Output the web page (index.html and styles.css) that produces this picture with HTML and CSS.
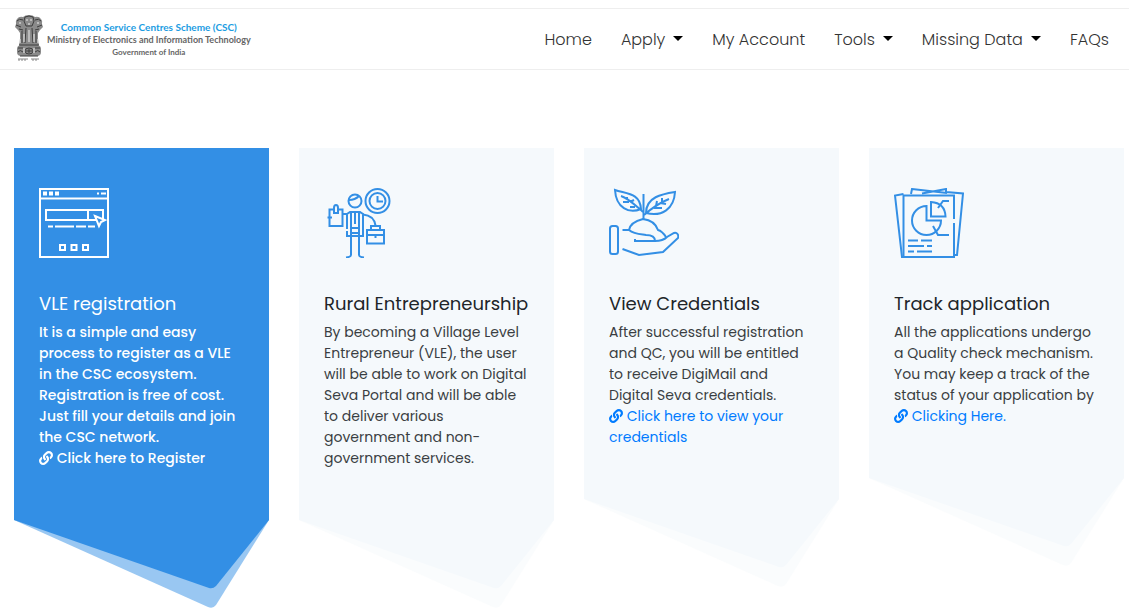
FILE: index.html
```
<!DOCTYPE html>
<html lang="en">
<head>
    <meta charset="UTF-8">
    <meta name="viewport" content="width=device-width, initial-scale=1.0">
    <title>Common Service Centres Scheme (CSC)</title>
    <link rel="stylesheet" href="styles.css">
</head>
<body>
    <!-- Shared shapes -->
    <svg class="defs" aria-hidden="true">
        <symbol id="link-icon" viewBox="0 0 512 512">
            <path d="M326.612 185.391c59.747 59.809 58.927 155.698.36 214.59-.11.12-.24.25-.36.37l-67.2 67.2c-59.27 59.27-155.699 59.262-214.96 0-59.27-59.26-59.27-155.7 0-214.96l37.106-37.106c9.84-9.84 26.786-3.3 27.294 10.606.648 17.722 3.826 35.527 9.69 52.721 1.986 5.822.567 12.262-3.783 16.612l-13.087 13.087c-28.026 28.026-28.905 73.66-1.155 101.96 28.024 28.579 74.086 28.749 102.325.51l67.2-67.19c28.191-28.191 28.073-73.757 0-101.83-3.701-3.694-7.429-6.564-10.341-8.569a16.037 16.037 0 0 1-6.947-12.606c-.396-10.567 3.348-21.456 11.698-29.806l21.054-21.055c5.521-5.521 14.182-6.199 20.584-1.731a152.482 152.482 0 0 1 20.522 17.197zM467.547 44.449c-59.261-59.262-155.69-59.27-214.96 0l-67.2 67.2c-.12.12-.25.25-.36.37-58.566 58.892-59.387 154.781.36 214.59a152.454 152.454 0 0 0 20.521 17.196c6.402 4.468 15.064 3.789 20.584-1.731l21.054-21.055c8.35-8.35 12.094-19.239 11.698-29.806a16.037 16.037 0 0 0-6.947-12.606c-2.912-2.005-6.64-4.875-10.341-8.569-28.073-28.073-28.191-73.639 0-101.83l67.2-67.19c28.239-28.239 74.3-28.069 102.325.51 27.75 28.3 26.872 73.934-1.155 101.96l-13.087 13.087c-4.35 4.35-5.769 10.79-3.783 16.612 5.864 17.194 9.042 34.999 9.69 52.721.509 13.906 17.454 20.446 27.294 10.606l37.106-37.106c59.271-59.259 59.271-155.699.001-214.959z"/>
        </symbol>
        <symbol id="tail" viewBox="0 0 255 89">
            <path opacity="0.5" d="M0 0L194 87q5 2 8-2L255 0z"/>
            <path d="M0 0L195 68q4 1 7-2L255 0z"/>
        </symbol>
    </svg>

    <header class="header">
        <a class="brand" href="#">
            <svg class="emblem" viewBox="0 0 28 48" aria-hidden="true">
                <g fill="#8a8a8a">
                    <path d="M8 2Q10 0 14 0t6 2q4-1 6 2 2 2 1 5l1 3-3 3-2 3v6l1 6H4l1-6v-6l-2-3-3-3 1-3Q0 6 2 4q2-3 6-2z"/>
                    <path d="M5 30h18q3 1 3 4v3q0 4-4 4H6q-4 0-4-4v-3q0-3 3-4z"/>
                </g>
                <g fill="none" stroke="#3c3c3c">
                    <path d="M10 2q4-2 8 0l1 4-2 5h-6L9 6zM2 6q2-3 6-1M26 6q-2-3-6-1M1 10l5 2M27 10l-5 2M4 14l4 1M24 14l-4 1"/>
                    <path d="M7 16v12M11 13l-1 15M17 13l1 15M21 16v12M4 30h20M3 33h5M20 33h5M5 41h18"/>
                    <ellipse cx="14" cy="36" rx="4" ry="3"/>
                    <path d="M3 37q2-3 5 0M20 37q3-3 5 0M11 36h6M14 34v4"/>
                </g>
                <path d="M14 15v12M9 19v8M19 19v8M5 24v4M23 24v4M11 5h2M15 5h2M13 9h2M4 8h2M22 8h2M9 33v5M19 33v5" stroke="#eee" fill="none"/>
                <path d="M3 44h10M16 44h8M4 44v2M7 44v2M10 44v2M18 44v2M21 44v2" stroke="#888" fill="none"/>
            </svg>
            <span class="brand-text">
                <span class="brand-name">Common Service Centres Scheme (CSC)</span>
                <span class="brand-ministry">Ministry of Electronics and Information Technology</span>
                <span class="brand-gov">Government of India</span>
            </span>
        </a>
        <nav class="nav">
            <a href="#">Home</a>
            <button type="button" class="dropdown">Apply</button>
            <a href="#">My Account</a>
            <button type="button" class="dropdown">Tools</button>
            <button type="button" class="dropdown">Missing Data</button>
            <a href="#">FAQs</a>
        </nav>
    </header>

    <main class="cards">
        <article class="card active">
            <div class="card-body">
                <svg class="card-icon" viewBox="0 0 70 70" aria-hidden="true">
                    <path d="M1 1h68v68H1zM1 10.500h68M7 22h57v10H7zM49 22v10"/>
                    <path d="M4 5.500h4M10 5.500h4M16 5.500h4" stroke-width="4"/>
                    <path d="M58 5.500h2M62 5.500h5M9 38.500h5M16 38.500h19M37 38.500h10M49 38.500h7"/>
                    <path class="solid" d="M56 28l10 4-4 2-2 4z"/>
                    <path d="M21 57h5v5h-5zM32.500 57h5v5h-5zM44 57h5v5h-5z"/>
                </svg>
                <h4>VLE registration</h4>
                <p>It is a simple and easy process to register as a VLE in the CSC ecosystem. Registration is free of cost. Just fill your details and join the CSC network.<br>
                <a href="#"><svg class="link-icon" aria-hidden="true"><use href="#link-icon"/></svg> Click here to Register</a></p>
            </div>
            <svg class="card-tail" viewBox="0 0 255 89" aria-hidden="true"><use href="#tail"/></svg>
        </article>

        <article class="card">
            <div class="card-body">
                <svg class="card-icon" viewBox="0 0 70 70" aria-hidden="true">
                    <circle cx="53.500" cy="13" r="12"/>
                    <circle cx="53.500" cy="13" r="8"/>
                    <path d="M53.500 8v5.500H59"/>
                    <circle cx="31" cy="13" r="6.500"/>
                    <path d="M25 12q6 0 10-4"/>
                    <path d="M10 21.500H5.500V38h13V21.500H14M10 25v-5q0-3 2-3t2 3v5zM3.500 29.500H8M18.500 26H23"/>
                    <path d="M23 41V26l3-2h10l3 2v22H23v-5M27 24v24M35 24v24M31 24v12M27 40h8M27 45h8"/>
                    <path d="M39 26.500q11 1 12.500 11"/>
                    <path d="M43 42h17v13.500H43zM47 42v-4h9v4M43 47h17M51.500 46v4"/>
                    <path d="M27 48v19q0 2-5 2.500M35 48v19q0 2 5 2.500"/>
                </svg>
                <h4>Rural Entrepreneurship</h4>
                <p>By becoming a Village Level Entrepreneur (VLE), the user will be able to work on Digital Seva Portal and will be able to deliver various government and non-government services.</p>
            </div>
            <svg class="card-tail" viewBox="0 0 255 89" aria-hidden="true"><use href="#tail"/></svg>
        </article>

        <article class="card">
            <div class="card-body">
                <svg class="card-icon" viewBox="0 0 70 70" aria-hidden="true">
                    <rect x="1" y="38" width="8" height="28" rx="2.500"/>
                    <path d="M13.500 42H20c5 4 10 4 17 5 6 0 9 2 9 6H26v-2"/>
                    <path d="M20 42c1-6 6-9 14-11 8 1 13 5 15 11 4 1 6 4 8 7"/>
                    <path d="M46 53c5 0 9-1 12-4l7-4c3-1 5 2 4 5L54 64l-24 3-16.500-6"/>
                    <path d="M34.500 6v25"/>
                    <path d="M6 2c12 4 25 3 26 19-12 5-25-1-26-19zM12 8c7 2 14 9 22 16M18 12v-3M21 14l4-2M20 14l-6 0M26 19h-5"/>
                    <path d="M66 4c-13 2-29 5-29 21 16 4 28-4 29-21zM60 11c-10 4-17 9-25 16M53 14V10M47 18l1-5M51 15l6 1M45 20h8"/>
                </svg>
                <h4>View Credentials</h4>
                <p>After successful registration and QC, you will be entitled to receive DigiMail and Digital Seva credentials.<br>
                <a href="#"><svg class="link-icon" aria-hidden="true"><use href="#link-icon"/></svg> Click here to view your credentials</a></p>
            </div>
            <svg class="card-tail" viewBox="0 0 255 89" aria-hidden="true"><use href="#tail"/></svg>
        </article>

        <article class="card">
            <div class="card-body">
                <svg class="card-icon" viewBox="0 0 70 70" aria-hidden="true">
                    <path d="M60 31V7.500H9.500V69H60V35"/>
                    <path d="M9.500 6L1 7.500 8 69h2M17 6l1-5 35 4M28 5.500L52 1v4M52 4l17 1.500L63 67h-3"/>
                    <path d="M32.500 18A14.500 14.500 0 1 0 47 32.500H32.500z"/>
                    <path d="M37 14v14.500h14.500Q51 15 37 14z"/>
                    <path d="M44 20l5-7h6M39 38l5 9h11"/>
                    <path d="M14 52.500h10M27 52.500h11M14 58h16M33 58h5M14 63.500h6M23 63.500h15"/>
                </svg>
                <h4>Track application</h4>
                <p>All the applications undergo a Quality check mechanism. You may keep a track of the status of your application by<br>
                <a href="#"><svg class="link-icon" aria-hidden="true"><use href="#link-icon"/></svg> Clicking Here.</a></p>
            </div>
            <svg class="card-tail" viewBox="0 0 255 89" aria-hidden="true"><use href="#tail"/></svg>
        </article>
    </main>
</body>
</html>
```
FILE: styles.css
```
* {
    box-sizing: border-box;
}
body {
    margin: 0;
    font-family: Poppins, Inter, sans-serif;
    font-size: 14px;
    line-height: 21px;
    color: #212529;
    background-color: #fff;
}
a {
    color: #007bff;
    text-decoration: none;
}
.defs {
    display: none;
}

/* Header */
.header {
    display: flex;
    align-items: center;
    justify-content: space-between;
    min-height: 62px;
    margin-top: 8px;
    padding: 0 20px 0 15px;
    border-top: 1px solid #eee;
    border-bottom: 1px solid #eee;
}
.brand {
    display: flex;
    align-items: center;
    gap: 4px;
}
.emblem {
    width: 28px;
    height: 48px;
}
.brand-text {
    display: flex;
    flex-direction: column;
    align-items: center;
    font-family: Lato, sans-serif;
    font-weight: bold;
    color: #666;
}
.brand-name {
    font-size: 10px;
    line-height: 14px;
    color: #1b9ce2;
}
.brand-ministry {
    font-size: 9px;
    line-height: 12px;
}
.brand-gov {
    font-size: 8px;
    line-height: 12px;
}
.nav {
    display: flex;
    align-items: center;
    gap: 29px;
    padding-top: 2px;
}
.nav a,
.nav button {
    padding: 0;
    border: none;
    background: none;
    font-family: inherit;
    font-size: 16px;
    font-weight: 300;
    line-height: 24px;
    color: #333;
    cursor: pointer;
}
.dropdown {
    display: flex;
    align-items: center;
    gap: 8px;
}
.dropdown::after {
    content: "";
    margin-bottom: 4px;
    border-top: 5px solid #000;
    border-left: 5px solid transparent;
    border-right: 5px solid transparent;
}

/* Cards */
.cards {
    display: grid;
    grid-template-columns: repeat(4, 1fr);
    align-items: start;
    gap: 30px;
    padding: 78px 5px 0 14px;
}
.card {
    --card-bg: #f5f9fc;
    --icon: #338fe5;
}
.card-body {
    padding: 40px 25px 51px;
    background-color: var(--card-bg);
}
.card-icon {
    display: block;
    width: 70px;
    height: 70px;
    margin-bottom: 35px;
    fill: none;
    stroke: var(--icon);
    stroke-width: 2;
}
.card-icon .solid {
    fill: var(--card-bg);
}
.card h4 {
    margin: 0 0 7px;
    font-size: 18px;
    font-weight: 400;
    line-height: 22px;
}
.card p {
    margin: 0;
    color: #3a3e42;
}
.card-tail {
    display: block;
    width: 100%;
    fill: var(--card-bg);
}
.link-icon {
    width: 14px;
    height: 14px;
    vertical-align: -2px;
    fill: currentColor;
}
.card.active {
    --card-bg: #338fe5;
    --icon: #fff;
    color: #fff;
}
.card.active a {
    color: #fff;
}
.card.active p {
    font-weight: 500;
    color: #fff;
}
```
